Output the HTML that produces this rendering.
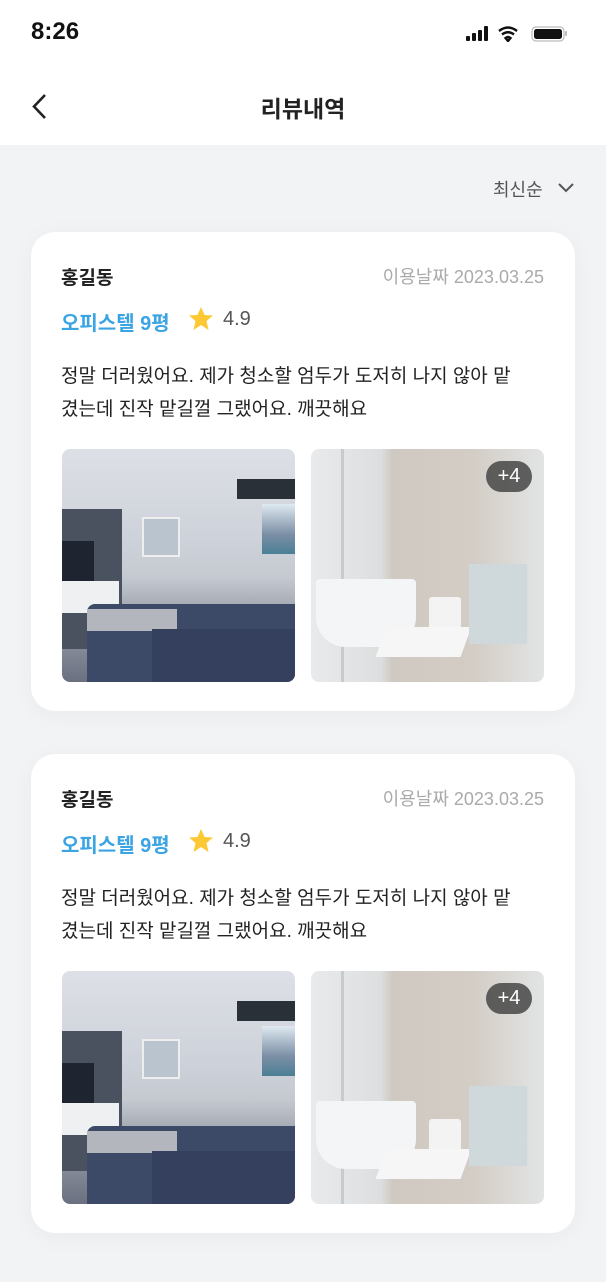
<!DOCTYPE html><html><head><meta charset="utf-8"><style>
*{margin:0;padding:0;box-sizing:border-box}
body{width:606px;height:1282px;background:#f2f3f5;font-family:"Liberation Sans","Noto Sans CJK KR",sans-serif;position:relative;overflow:hidden}
.hdr{position:absolute;left:0;top:0;width:606px;height:145px;background:#fff}
.t{position:absolute;white-space:nowrap}
.card{position:absolute;left:31px;width:544px;height:479px;background:#fff;border-radius:24px;box-shadow:0 4px 24px rgba(0,0,0,0.04)}
.img{position:absolute;top:217px;width:233px;height:233px;border-radius:8px;overflow:hidden}
.liv{left:31px;background:linear-gradient(180deg,#dde0e6 0%,#cdd1d9 40%,#c5c9d0 55%,#a0a5ae 70%,#6a7080 100%)}
.bath{left:280px;background:linear-gradient(90deg,#e8eaec 0%,#dcdedf 30%,#cfc9c1 35%,#d3cdc5 70%,#e2e4e5 100%)}
.nm{left:30px;top:31px;font-size:19px;color:#222;font-weight:bold}
.dt{right:31px;top:31px;font-size:18px;color:#aaa}
.tg{left:30px;top:75px;font-size:20px;color:#3ba4e3;font-weight:bold}
.rt{left:192px;top:76px;font-size:20px;color:#555}
.bd{left:30px;top:128px;font-size:19px;color:#222;line-height:33px}
</style></head><body>
<div class="hdr"></div>
<div class="t" style="left:31px;top:18px;font-size:24px;font-weight:bold;color:#111">8:26</div>
<svg style="position:absolute;left:466px;top:26px" width="110" height="16">
<rect x="0" y="10" width="4" height="5" rx="1" fill="#111"/><rect x="6" y="7" width="4" height="8" rx="1" fill="#111"/><rect x="12" y="4" width="4" height="11" rx="1" fill="#111"/><rect x="18" y="0" width="4" height="15" rx="1" fill="#111"/>
<path d="M33 5 Q42 -2 51 5 M36 8.5 Q42 4 48 8.5 M39.5 12 L42 15 L44.5 12 Q42 10 39.5 12Z" stroke="#111" stroke-width="2.4" fill="none"/>
<rect x="66" y="1" width="32" height="14" rx="4" fill="none" stroke="#bbb" stroke-width="1.2"/><rect x="68" y="3" width="28" height="10" rx="2.5" fill="#111"/><rect x="99" y="5" width="2" height="5" rx="1" fill="#bbb"/>
</svg>
<svg style="position:absolute;left:30px;top:93px" width="20" height="28"><path d="M15 2 L4 13.5 L15 25" stroke="#222" stroke-width="2.6" fill="none"/></svg>
<div class="t" style="left:0;width:606px;text-align:center;top:90px;font-size:23px;font-weight:bold;color:#222">리뷰내역</div>
<div class="t" style="left:493px;top:176px;font-size:18px;color:#555">최신순</div>
<svg style="position:absolute;left:556px;top:181px" width="20" height="14"><path d="M3 3 L10 10 L17 3" stroke="#555" stroke-width="2" fill="none"/></svg>

<div class="card" style="top:232px">
<div class="t nm">홍길동</div>
<div class="t dt">이용날짜 2023.03.25</div>
<div class="t tg">오피스텔 9평</div>
<svg style="position:absolute;left:156px;top:73px" width="28" height="28"><path d="M14 2 L17.5 10 L26 10.5 L19.5 16 L21.5 25 L14 20 L6.5 25 L8.5 16 L2 10.5 L10.5 10Z" fill="#fcc934"/></svg>
<div class="t rt">4.9</div>
<div class="t bd">정말 더러웠어요. 제가 청소할 엄두가 도저히 나지 않아 맡<br>겼는데 진작 맡길껄 그랬어요. 깨끗해요</div>
<div class="img liv">
<div style="position:absolute;left:0;top:60px;width:60px;height:140px;background:#4a5260"></div>
<div style="position:absolute;left:0;top:92px;width:32px;height:40px;background:#1e2430"></div>
<div style="position:absolute;left:0;top:132px;width:57px;height:32px;background:#eef0f2"></div>
<div style="position:absolute;left:80px;top:68px;width:38px;height:40px;background:#b9c4cf;border:2px solid #eee"></div>
<div style="position:absolute;left:175px;top:30px;width:58px;height:20px;background:#2a3038"></div>
<div style="position:absolute;left:200px;top:55px;width:33px;height:50px;background:linear-gradient(#dfe9f1,#7c8fa5 60%,#4a7f95)"></div>
<div style="position:absolute;left:25px;top:155px;width:208px;height:78px;background:#3c4a68;border-radius:8px 0 0 0"></div>
<div style="position:absolute;left:25px;top:160px;width:90px;height:22px;background:#b3b6bc"></div>
<div style="position:absolute;left:90px;top:180px;width:143px;height:53px;background:#34405d"></div>
</div>
<div class="img bath">
<div style="position:absolute;left:30px;top:0;width:3px;height:233px;background:#c7cbce"></div>
<div style="position:absolute;left:5px;top:130px;width:100px;height:68px;background:#f4f5f6;border-radius:4px 4px 30px 30px"></div>
<div style="position:absolute;left:118px;top:148px;width:32px;height:40px;background:#f3f3f3;border-radius:3px"></div>
<div style="position:absolute;left:70px;top:178px;width:85px;height:30px;background:#f6f6f6;transform:skewX(-20deg)"></div>
<div style="position:absolute;left:158px;top:115px;width:58px;height:80px;background:#cfd8da"></div>
<div style="position:absolute;right:12px;top:12px;width:46px;height:31px;border-radius:16px;background:rgba(70,70,70,0.85);color:#fff;font-size:20px;text-align:center;line-height:31px">+4</div>
</div>
</div>

<div class="card" style="top:754px">
<div class="t nm">홍길동</div>
<div class="t dt">이용날짜 2023.03.25</div>
<div class="t tg">오피스텔 9평</div>
<svg style="position:absolute;left:156px;top:73px" width="28" height="28"><path d="M14 2 L17.5 10 L26 10.5 L19.5 16 L21.5 25 L14 20 L6.5 25 L8.5 16 L2 10.5 L10.5 10Z" fill="#fcc934"/></svg>
<div class="t rt">4.9</div>
<div class="t bd">정말 더러웠어요. 제가 청소할 엄두가 도저히 나지 않아 맡<br>겼는데 진작 맡길껄 그랬어요. 깨끗해요</div>
<div class="img liv">
<div style="position:absolute;left:0;top:60px;width:60px;height:140px;background:#4a5260"></div>
<div style="position:absolute;left:0;top:92px;width:32px;height:40px;background:#1e2430"></div>
<div style="position:absolute;left:0;top:132px;width:57px;height:32px;background:#eef0f2"></div>
<div style="position:absolute;left:80px;top:68px;width:38px;height:40px;background:#b9c4cf;border:2px solid #eee"></div>
<div style="position:absolute;left:175px;top:30px;width:58px;height:20px;background:#2a3038"></div>
<div style="position:absolute;left:200px;top:55px;width:33px;height:50px;background:linear-gradient(#dfe9f1,#7c8fa5 60%,#4a7f95)"></div>
<div style="position:absolute;left:25px;top:155px;width:208px;height:78px;background:#3c4a68;border-radius:8px 0 0 0"></div>
<div style="position:absolute;left:25px;top:160px;width:90px;height:22px;background:#b3b6bc"></div>
<div style="position:absolute;left:90px;top:180px;width:143px;height:53px;background:#34405d"></div>
</div>
<div class="img bath">
<div style="position:absolute;left:30px;top:0;width:3px;height:233px;background:#c7cbce"></div>
<div style="position:absolute;left:5px;top:130px;width:100px;height:68px;background:#f4f5f6;border-radius:4px 4px 30px 30px"></div>
<div style="position:absolute;left:118px;top:148px;width:32px;height:40px;background:#f3f3f3;border-radius:3px"></div>
<div style="position:absolute;left:70px;top:178px;width:85px;height:30px;background:#f6f6f6;transform:skewX(-20deg)"></div>
<div style="position:absolute;left:158px;top:115px;width:58px;height:80px;background:#cfd8da"></div>
<div style="position:absolute;right:12px;top:12px;width:46px;height:31px;border-radius:16px;background:rgba(70,70,70,0.85);color:#fff;font-size:20px;text-align:center;line-height:31px">+4</div>
</div>
</div>
</body></html>
